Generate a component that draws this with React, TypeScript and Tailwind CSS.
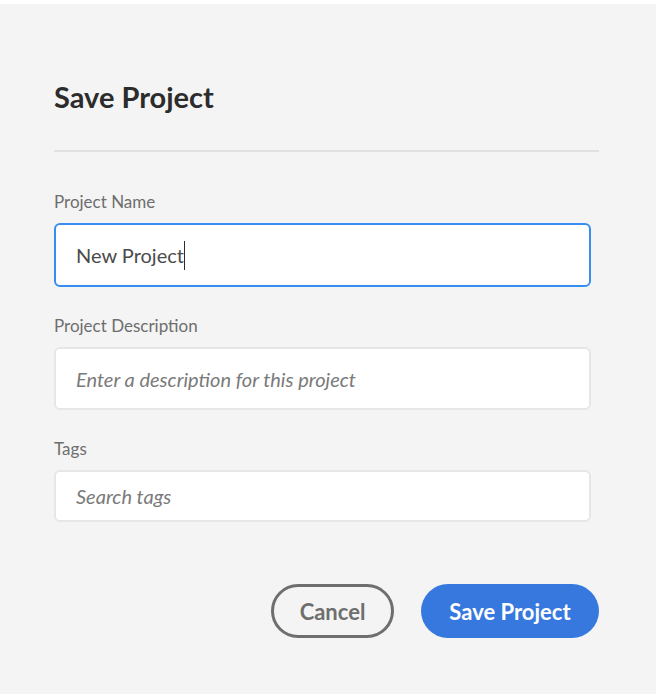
const font = { fontFamily: "Lato, 'Open Sans', sans-serif" };

function Field({ label, children }: { label: string; children: React.ReactNode }) {
  return (
    <div className="flex flex-col">
      <label className="text-[17px] leading-[20px] text-[#6e6e6e] mb-[11px]">{label}</label>
      {children}
    </div>
  );
}

export default function App() {
  return (
    <div className="w-[658px] h-[694px] bg-white pt-[4px] pr-[2px]" style={font}>
      <div className="h-[690px] bg-[#f4f4f4] pl-[54px] pr-[57px] pt-[75px]">
        <h1 className="text-[29px] leading-[36px] font-bold text-[#2c2c2c]">Save Project</h1>
        <div className="h-[2px] bg-[#e1e1e1] mt-[35px] mb-[40px]" />

        <div className="flex flex-col gap-[29px] pr-[8px]">
          <Field label="Project Name">
            <div className="h-[64px] rounded-[6px] border-2 border-[#378ef0] bg-white flex items-center px-[20px]">
              <span className="text-[20px] text-[#4b4b4b]">New Project</span>
              <span className="w-[1px] h-[29px] bg-[#2c2c2c]" />
            </div>
          </Field>

          <Field label="Project Description">
            <input
              className="h-[63px] rounded-[6px] border-2 border-[#e6e6e6] bg-white px-[20px] text-[20px] outline-none placeholder:italic placeholder:text-[#7a7a7a]"
              placeholder="Enter a description for this project"
            />
          </Field>

          <Field label="Tags">
            <input
              className="h-[52px] rounded-[6px] border-2 border-[#e6e6e6] bg-white px-[20px] text-[20px] outline-none placeholder:italic placeholder:text-[#7a7a7a]"
              placeholder="Search tags"
            />
          </Field>
        </div>

        <div className="flex justify-end gap-[27px] mt-[62px]">
          <button className="h-[54px] w-[123px] rounded-full border-[3px] border-[#6e6e6e] text-[22px] font-bold text-[#6e6e6e]">
            Cancel
          </button>
          <button className="h-[54px] w-[178px] rounded-full bg-[#3778df] text-[22px] font-bold text-white">
            Save Project
          </button>
        </div>
      </div>
    </div>
  );
}
